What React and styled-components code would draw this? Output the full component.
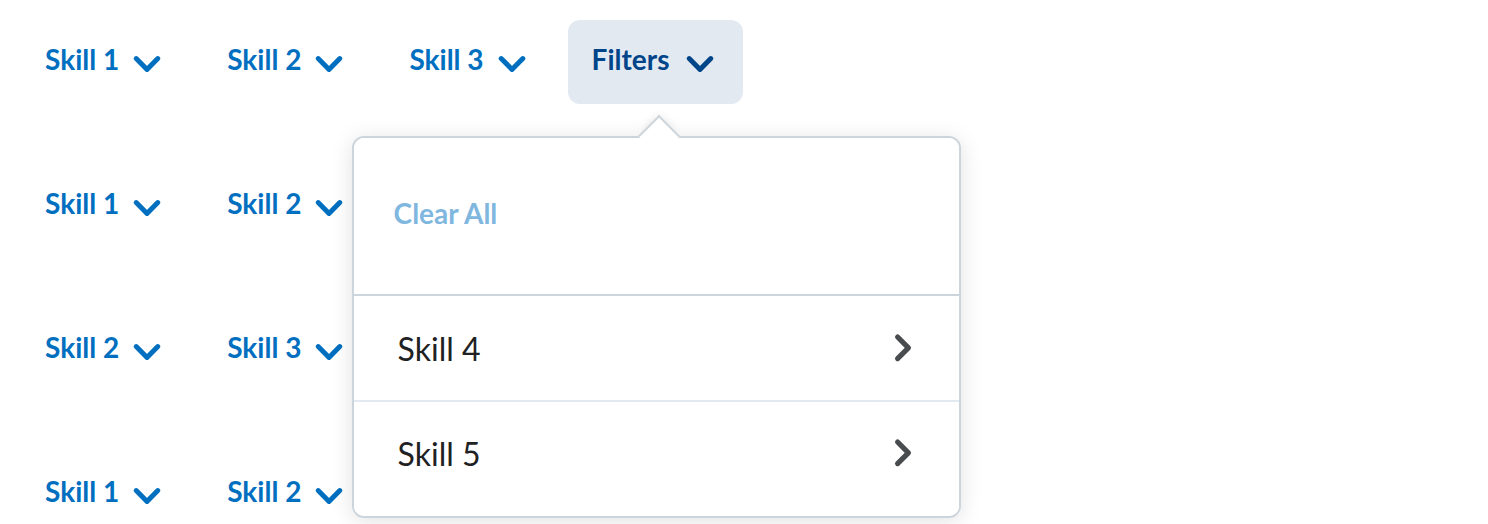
import React from "react";
import styled, { createGlobalStyle } from "styled-components";

const Global = createGlobalStyle`
  html, body { margin: 0; padding: 0; background: #ffffff; }
  body { font-family: Lato, "Noto Sans", sans-serif; overflow: hidden; }
  * { box-sizing: border-box; }
`;

const Page = styled.div`
  display: flex;
  flex-direction: column;
  gap: 60px;
  padding: 20px 21px;
  height: 524px;
`;

const Row = styled.div`
  display: flex;
  align-items: center;
  gap: 14px;
`;

const Opener = styled.button`
  display: inline-flex;
  align-items: center;
  gap: ${(p) => (p.$active ? "13px" : "10px")};
  height: 84px;
  padding: ${(p) => (p.$active ? "0 25px 0 24px" : "0 24px")};
  border: none;
  border-radius: 12px;
  background: ${(p) => (p.$active ? "#e3e9f1" : "transparent")};
  color: ${(p) => (p.$active ? "#004489" : "#006fbf")};
  font-family: Lato, sans-serif;
  font-weight: 700;
  font-size: 28px;
  line-height: 1;
  cursor: pointer;
  white-space: nowrap;
`;

const Label = styled.span`
  margin-bottom: 6px;
`;

const Holder = styled.div`
  position: relative;
  display: flex;
`;

const Dropdown = styled.div`
  position: absolute;
  top: 116px;
  left: -216px;
  width: 609px;
  z-index: 5;
  background: #ffffff;
  border: 2px solid #cdd5dc;
  border-radius: 12px;
  box-shadow: 0 3px 22px rgba(0, 0, 0, 0.12);
`;

const Pointer = styled.div`
  position: absolute;
  top: -17px;
  left: 290px;
  width: 30px;
  height: 30px;
  background: #ffffff;
  border-top: 2px solid #cdd5dc;
  border-left: 2px solid #cdd5dc;
  transform: rotate(45deg);
  box-shadow: -4px -4px 10px -4px rgba(0, 0, 0, 0.1);
`;

const Body = styled.div`
  position: relative;
  border-radius: 10px;
  background: #ffffff;
  overflow: hidden;
  padding-bottom: 10px;
`;

const Header = styled.div`
  display: flex;
  align-items: center;
  padding: 33px 40px 39px;
  border-bottom: 2px solid #cdd5dc;
`;

const ClearAll = styled.button`
  height: 84px;
  padding: 0;
  border: none;
  background: transparent;
  color: #80b7df;
  font-family: Lato, sans-serif;
  font-weight: 700;
  font-size: 28px;
  cursor: default;
`;

const Item = styled.div`
  display: flex;
  align-items: center;
  justify-content: space-between;
  height: ${(p) => (p.$last ? "104px" : "106px")};
  padding: ${(p) => (p.$last ? "0 39px 2px 44px" : "0 39px 0 44px")};
  border-bottom: ${(p) => (p.$last ? "none" : "2px solid #e3e9f1")};
  color: #202122;
  font-family: Lato, sans-serif;
  font-weight: 400;
  font-size: 32px;
`;

const Chevron = ({ color, dir = "down" }) =>
  dir === "down" ? (
    <svg width="36" height="36" viewBox="0 0 18 18" aria-hidden="true">
      <polyline
        points="3.6,7.3 9,12.7 14.4,7.3"
        fill="none"
        stroke={color}
        strokeWidth="2.5"
        strokeLinecap="round"
        strokeLinejoin="round"
      />
    </svg>
  ) : (
    <svg width="36" height="36" viewBox="0 0 18 18" aria-hidden="true">
      <polyline
        points="6.8,3.5 12.2,8.9 6.8,14.3"
        fill="none"
        stroke={color}
        strokeWidth="2.6"
        strokeLinecap="round"
        strokeLinejoin="round"
      />
    </svg>
  );

const SkillButton = ({ label }) => (
  <Opener>
    <Label>{label}</Label>
    <Chevron color="#006fbf" />
  </Opener>
);

const rows = [
  ["Skill 1", "Skill 2", "Skill 3"],
  ["Skill 1", "Skill 2"],
  ["Skill 2", "Skill 3"],
  ["Skill 1", "Skill 2"],
];

export default function App() {
  return (
    <>
      <Global />
      <Page>
        {rows.map((r, i) => (
          <Row key={i}>
            {r.map((s, j) => (
              <SkillButton key={j} label={s} />
            ))}
            {i === 0 && (
              <Holder>
                <Opener $active>
                  <Label>Filters</Label>
                  <Chevron color="#004489" />
                </Opener>
                <Dropdown>
                  <Pointer />
                  <Body>
                    <Header>
                      <ClearAll>Clear All</ClearAll>
                    </Header>
                    <Item>
                      Skill 4
                      <Chevron color="#494c4e" dir="right" />
                    </Item>
                    <Item $last>
                      Skill 5
                      <Chevron color="#494c4e" dir="right" />
                    </Item>
                  </Body>
                </Dropdown>
              </Holder>
            )}
          </Row>
        ))}
      </Page>
    </>
  );
}
